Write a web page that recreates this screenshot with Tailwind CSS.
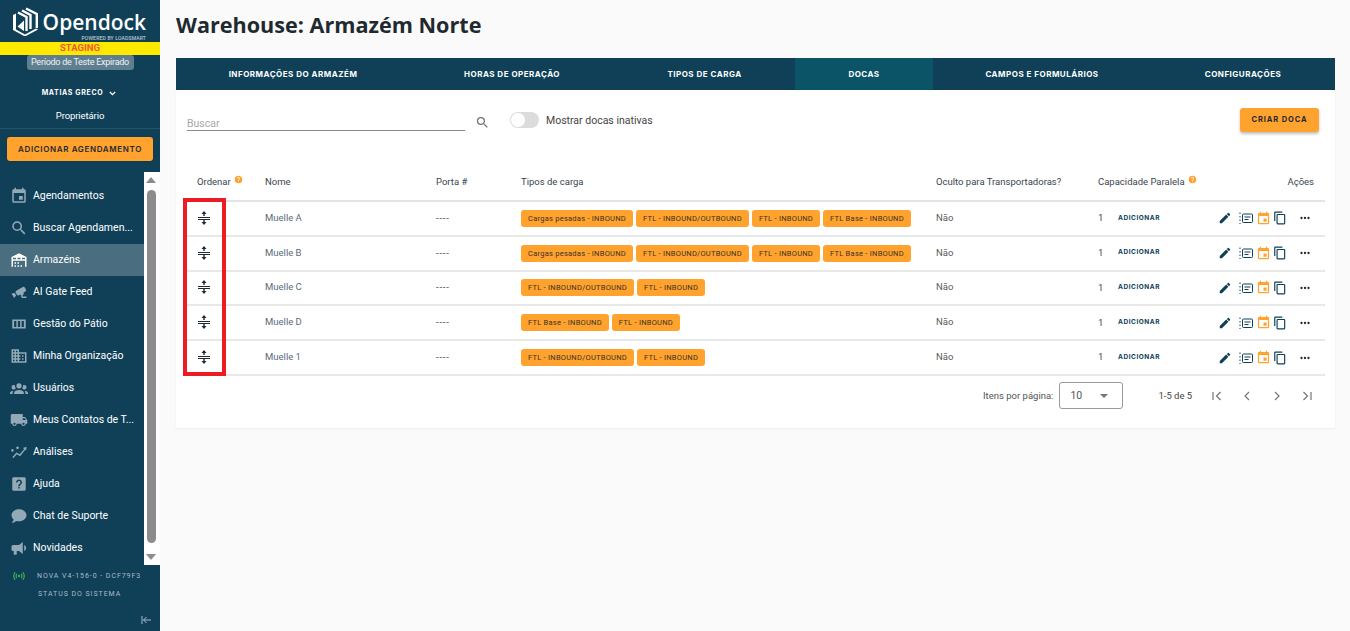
<!DOCTYPE html>
<html lang="pt">
<head>
    <meta charset="UTF-8">
    <title>Opendock - Warehouse</title>
    <script src="https://cdn.jsdelivr.net/npm/@tailwindcss/browser@4"></script>
</head>
<body class="bg-[#fafafa] h-[631px] w-[1350px] overflow-hidden flex font-['Roboto',sans-serif] text-[#2b3a44]">
    <!-- Sidebar -->
    <aside class="w-[160px] h-full shrink-0 bg-[#0f4058] text-white flex flex-col">
        <div class="h-[42px] flex pl-[13px] pt-[7px] gap-[7px]">
            <svg width="25" height="29" viewBox="0 0 25 29" fill="#fff" class="shrink-0">
                <path d="M0 8L3 6.5V22.5L12 27.5 23 21.5 25 22.5 12 29.5 0 23Z"/>
                <g fill="none" stroke="#fff" stroke-width="2.4">
                    <path d="M5 5.5L13.5 10V24"/>
                    <path d="M9 3.5L17.5 8V22"/>
                    <path d="M13 1.5L23.8 7V21"/>
                </g>
                <path d="M11 13.5V24L4.5 19.5Z"/>
            </svg>
            <div class="flex flex-col items-end w-[101px]">
                <span class="font-['Open_Sans',sans-serif] font-semibold text-[21px] leading-[28px] mt-[1px] whitespace-nowrap">Opendock</span>
                <span class="text-[5px] leading-[6px] mt-[-1px] text-white/80 whitespace-nowrap tracking-[0.2px]">POWERED BY LOADSMART</span>
            </div>
        </div>
        <div class="h-[13px] bg-[#ffe900] text-center text-[#f4553f] text-[9.5px] leading-[12px] font-bold">STAGING</div>
        <div class="self-center w-[107px] h-[15px] bg-[#5f7e90] rounded-[3px] text-center text-[9px] leading-[15px] tracking-[-0.25px] text-white/90 whitespace-nowrap">Período de Teste Expirado</div>
        <div class="mt-[18px] flex items-center justify-center gap-[5px] h-[10px] pr-[1px]">
            <span class="font-['Inter',sans-serif] font-bold text-[7px] tracking-[0.65px]">MATIAS GRECO</span>
            <svg width="9" height="9" viewBox="0 0 24 24" fill="none" stroke="#fff" stroke-width="3.5"><path d="M5 8l7 7 7-7"/></svg>
        </div>
        <div class="mt-[11px] text-center text-[9.5px] leading-[14px] h-[18px] tracking-[-0.1px]">Proprietário</div>
        <div class="border-t border-white/10 mt-[1px]"></div>
        <button class="mx-[7px] mt-[8px] h-[24px] rounded-[3px] bg-[#ffa22e] text-[#1f2a30] font-['Inter',sans-serif] font-semibold text-[8px] tracking-[0.65px] shadow-sm whitespace-nowrap">ADICIONAR AGENDAMENTO</button>

        <div class="mt-[11px] h-[393px] flex">
            <nav id="nav" class="w-[144px] pt-[8px] flex flex-col"></nav>
            <div class="w-[16px] bg-white flex flex-col items-center pr-[2px]">
                <svg width="10" height="6" viewBox="0 0 10 6" class="mt-[5px] shrink-0" fill="#8c8c8c"><path d="M5 0l5 6H0z"/></svg>
                <div class="mt-[7px] w-[9px] h-[353px] bg-[#8c8c8c] rounded-[5px] shrink-0"></div>
                <svg width="10" height="6" viewBox="0 0 10 6" class="mt-[11px] shrink-0" fill="#8c8c8c"><path d="M5 6l5-6H0z"/></svg>
            </div>
        </div>
        <div class="mt-[5px] pl-[12px] flex items-center gap-[11px] h-[12px]">
            <svg width="14" height="14" viewBox="0 0 24 24" fill="#3fae56" class="shrink-0"><path d="M4.93,4.93C3.12,6.74 2,9.24 2,12C2,14.76 3.12,17.26 4.93,19.07L6.34,17.66C4.89,16.22 4,14.22 4,12C4,9.79 4.89,7.78 6.34,6.34L4.93,4.93M19.07,4.93L17.66,6.34C19.11,7.78 20,9.79 20,12C20,14.22 19.11,16.22 17.66,17.66L19.07,19.07C20.88,17.26 22,14.76 22,12C22,9.24 20.88,6.74 19.07,4.93M7.76,7.76C6.67,8.85 6,10.35 6,12C6,13.65 6.67,15.15 7.76,16.24L9.17,14.83C8.45,14.11 8,13.11 8,12C8,10.89 8.45,9.89 9.17,9.17L7.76,7.76M16.24,7.76L14.83,9.17C15.55,9.89 16,10.89 16,12C16,13.11 15.55,14.11 14.83,14.83L16.24,16.24C17.33,15.15 18,13.65 18,12C18,10.35 17.33,8.85 16.24,7.76M12,10A2,2 0 0,0 10,12A2,2 0 0,0 12,14A2,2 0 0,0 14,12A2,2 0 0,0 12,10Z"/></svg>
            <span class="text-[7px] tracking-[0.95px] text-[#a9bcc7] whitespace-nowrap">NOVA V4-156-0 - DCF79F3</span>
        </div>
        <div class="mt-[8px] pl-[38px] text-[7px] leading-[9px] tracking-[0.95px] text-[#a9bcc7] whitespace-nowrap">STATUS DO SISTEMA</div>
        <div class="mt-[15px] pr-[8px] flex justify-end">
            <svg width="12" height="12" viewBox="0 0 24 24" fill="none" stroke="#a9bcc7" stroke-width="2"><path d="M4 4v16M22 12H7M13 6l-6 6 6 6"/></svg>
        </div>
    </aside>

    <!-- Main Content -->
    <main class="flex-1 pl-[16px] pr-[15px]">
        <h1 class="h-[58px] pt-[10px] font-['Open_Sans',sans-serif] font-bold text-[21.6px] leading-[30px] text-[#1f2a30]">Warehouse: Armazém Norte</h1>

        <div class="h-[32px] pb-[1px] bg-[#0f4058] flex text-white font-['Inter',sans-serif] font-bold text-[8px] tracking-[0.5px]">
            <div class="w-[234px] flex items-center justify-center">INFORMAÇÕES DO ARMAZÉM</div>
            <div class="w-[204px] flex items-center justify-center">HORAS DE OPERAÇÃO</div>
            <div class="w-[181px] flex items-center justify-center">TIPOS DE CARGA</div>
            <div class="w-[138px] h-[32px] flex items-center justify-center bg-[#0b5366]">DOCAS</div>
            <div class="w-[218px] flex items-center justify-center">CAMPOS E FORMULÁRIOS</div>
            <div class="w-[184px] flex items-center justify-center">CONFIGURAÇÕES</div>
        </div>

        <section class="h-[338px] bg-white shadow-[0_1px_2px_rgba(0,0,0,0.06)] px-[10px]">
            <div class="h-[75px] flex items-start">
                <div class="w-[278px] ml-[1px] mt-[26px] h-[15px] border-b border-[#8a8a8a] pt-[1px] text-[10.5px] leading-[13px] text-[#a8a8a8]">Buscar</div>
                <svg width="15" height="15" viewBox="0 0 24 24" fill="#757575" class="ml-[10px] mt-[25px]"><path d="M9.5,3A6.5,6.5 0 0,1 16,9.5C16,11.11 15.41,12.59 14.44,13.73L14.71,14H15.5L20.5,19L19,20.5L14,15.5V14.71L13.73,14.44C12.59,15.41 11.11,16 9.5,16A6.5,6.5 0 0,1 3,9.5A6.5,6.5 0 0,1 9.5,3M9.5,5C7,5 5,7 5,9.5C5,12 7,14 9.5,14C12,14 14,12 14,9.5C14,7 12,5 9.5,5Z"/></svg>
                <div class="ml-[20px] mt-[22px] w-[29px] h-[16px] rounded-full bg-[#dcdcdc] relative shrink-0">
                    <div class="w-[14px] h-[14px] rounded-full bg-white absolute left-[1px] top-[1px]"></div>
                </div>
                <span class="ml-[7px] mt-[24px] text-[10.5px] leading-[14px] text-[#444]">Mostrar docas inativas</span>
                <button class="ml-auto mr-[6px] mt-[18px] w-[79px] h-[24px] rounded-[3px] bg-[#ffa22e] text-[#1f2a30] font-['Inter',sans-serif] font-bold text-[7.5px] tracking-[0.9px] shadow-[0_2px_3px_rgba(0,0,0,0.25)]">CRIAR DOCA</button>
            </div>

            <!-- Table -->
            <div class="relative">
                <div class="grid grid-cols-[79px_171px_85px_415px_162px_226px] h-[37px] items-center text-[9.5px] text-[#39464e] border-b-2 border-[#e4e4e4]">
                    <div class="pl-[11px] flex items-start gap-[3px]">Ordenar <svg width="9" height="9" viewBox="0 0 24 24" fill="#ffa22e"><path d="M15.07,11.25L14.17,12.17C13.45,12.89 13,13.5 13,15H11V14.5C11,13.39 11.45,12.39 12.17,11.67L13.41,10.41C13.78,10.05 14,9.55 14,9C14,7.89 13.1,7 12,7A2,2 0 0,0 10,9H8A4,4 0 0,1 12,5A4,4 0 0,1 16,9C16,9.88 15.64,10.67 15.07,11.25M13,19H11V17H13M12,2A10,10 0 0,0 2,12A10,10 0 0,0 12,22A10,10 0 0,0 22,12C22,6.47 17.5,2 12,2Z"/></svg></div>
                    <div>Nome</div>
                    <div>Porta #</div>
                    <div>Tipos de carga</div>
                    <div>Oculto para Transportadoras?</div>
                    <div class="flex items-start justify-between pr-[10px]">
                        <span class="flex items-start gap-[3px]">Capacidade Paralela <svg width="9" height="9" viewBox="0 0 24 24" fill="#ffa22e"><path d="M15.07,11.25L14.17,12.17C13.45,12.89 13,13.5 13,15H11V14.5C11,13.39 11.45,12.39 12.17,11.67L13.41,10.41C13.78,10.05 14,9.55 14,9C14,7.89 13.1,7 12,7A2,2 0 0,0 10,9H8A4,4 0 0,1 12,5A4,4 0 0,1 16,9C16,9.88 15.64,10.67 15.07,11.25M13,19H11V17H13M12,2A10,10 0 0,0 2,12A10,10 0 0,0 12,22A10,10 0 0,0 22,12C22,6.47 17.5,2 12,2Z"/></svg></span>
                        <span>Ações</span>
                    </div>
                </div>
                <div id="rows"></div>
                <div class="absolute left-[-3px] top-[33px] w-[43px] h-[178px] border-[4px] border-[#ed1c24]"></div>
            </div>

            <!-- Pagination -->
            <div class="h-[40px] flex items-center text-[9.5px] text-[#555]">
                <span class="ml-[797px]">Itens por página:</span>
                <div class="ml-[6px] w-[64px] h-[27px] border border-[#9a9a9a] rounded-[3px] flex items-center justify-between pl-[10px] pr-[14px] text-[10.5px]">
                    <span>10</span>
                    <svg width="8" height="4" viewBox="0 0 8 4" fill="#757575"><path d="M0 0h8L4 4z"/></svg>
                </div>
                <span class="ml-[35px] text-[#444]">1-5 de 5</span>
                <div class="ml-[19px] flex gap-[18px]">
                    <svg width="12" height="12" viewBox="0 0 24 24" fill="none" stroke="#757575" stroke-width="2.4"><path d="M4 4v16M19 4l-8 8 8 8"/></svg>
                    <svg width="12" height="12" viewBox="0 0 24 24" fill="none" stroke="#757575" stroke-width="2.4"><path d="M16 4l-8 8 8 8"/></svg>
                    <svg width="12" height="12" viewBox="0 0 24 24" fill="none" stroke="#757575" stroke-width="2.4"><path d="M8 4l8 8-8 8"/></svg>
                    <svg width="12" height="12" viewBox="0 0 24 24" fill="none" stroke="#757575" stroke-width="2.4"><path d="M5 4l8 8-8 8M20 4v16"/></svg>
                </div>
            </div>
        </section>
    </main>

    <script>
        const icons = {
            calendar: 'M19 19H5V8h14m-3-7v2H8V1H6v2H5c-1.11 0-2 .89-2 2v14a2 2 0 0 0 2 2h14a2 2 0 0 0 2-2V5a2 2 0 0 0-2-2h-1V1m-1 11h-5v5h5v-5z',
            search: 'M9.5,3A6.5,6.5 0 0,1 16,9.5C16,11.11 15.41,12.59 14.44,13.73L14.71,14H15.5L20.5,19L19,20.5L14,15.5V14.71L13.73,14.44C12.59,15.41 11.11,16 9.5,16A6.5,6.5 0 0,1 3,9.5A6.5,6.5 0 0,1 9.5,3M9.5,5C7,5 5,7 5,9.5C5,12 7,14 9.5,14C12,14 14,12 14,9.5C14,7 12,5 9.5,5Z',
            warehouse: 'M6 19H8V21H6V19M12 3L2 8V21H4V13H20V21H22V8L12 3M8 11H4V9H8V11M14 11H10V9H14V11M20 11H16V9H20V11M6 15H8V17H6V15M10 15H12V17H10V15M10 19H12V21H10V19M14 19H16V21H14V19Z',
            cctv: 'M18.15,4.94C17.77,4.91 17.37,5 17,5.2L8.35,10.2C7.39,10.76 7.07,12 7.62,12.94L9.12,15.53C9.67,16.5 10.89,16.82 11.85,16.27L13.65,15.23C13.92,15.69 14.32,16.06 14.81,16.27V18.04C14.81,19.13 15.7,20 16.81,20H22V18.04H16.81V16.27C17.72,15.87 18.31,14.97 18.31,14C18.31,13.54 18.19,13.11 17.97,12.73L20.5,11.27C21.47,10.71 21.8,9.5 21.24,8.53L19.74,5.94C19.4,5.34 18.79,5 18.15,4.94M6.22,13.17L2,13.87L2.75,15.17L4.75,18.63L5.5,19.93L8.22,16.63L6.22,13.17Z',
            yard: 'M3 6h18v12H3z M5.5 8v8h3V8z M10.5 8v8h3V8z M15.5 8v8h3V8z',
            domain: 'M18,15H16V17H18M18,11H16V13H18M20,19H12V17H14V15H12V13H14V11H12V9H20M10,7H8V5H10M10,11H8V9H10M10,15H8V13H10M10,19H8V17H10M6,7H4V5H6M6,11H4V9H6M6,15H4V13H6M6,19H4V17H6M12,7V3H2V21H22V7H12Z',
            users: 'M12,5.5A3.5,3.5 0 0,1 15.5,9A3.5,3.5 0 0,1 12,12.5A3.5,3.5 0 0,1 8.5,9A3.5,3.5 0 0,1 12,5.5M5,8C5.56,8 6.08,8.15 6.53,8.42C6.38,9.85 6.8,11.27 7.66,12.38C7.16,13.34 6.16,14 5,14A3,3 0 0,1 2,11A3,3 0 0,1 5,8M19,8A3,3 0 0,1 22,11A3,3 0 0,1 19,14C17.84,14 16.84,13.34 16.34,12.38C17.2,11.27 17.62,9.85 17.47,8.42C17.92,8.15 18.44,8 19,8M5.5,18.25C5.5,16.18 8.41,14.5 12,14.5C15.59,14.5 18.5,16.18 18.5,18.25V20H5.5V18.25M0,20V18.5C0,17.11 1.89,15.94 4.45,15.6C3.86,16.28 3.5,17.22 3.5,18.25V20H0M24,20H20.5V18.25C20.5,17.22 20.14,16.28 19.55,15.6C22.11,15.94 24,17.11 24,18.5V20Z',
            truck: 'M18,18.5A1.5,1.5 0 0,1 16.5,17A1.5,1.5 0 0,1 18,15.5A1.5,1.5 0 0,1 19.5,17A1.5,1.5 0 0,1 18,18.5M19.5,9.5L21.46,12H17V9.5M6,18.5A1.5,1.5 0 0,1 4.5,17A1.5,1.5 0 0,1 6,15.5A1.5,1.5 0 0,1 7.5,17A1.5,1.5 0 0,1 6,18.5M20,8H17V4H3C1.89,4 1,4.89 1,6V17H3A3,3 0 0,0 6,20A3,3 0 0,0 9,17H15A3,3 0 0,0 18,20A3,3 0 0,0 21,17H23V12L20,8Z',
            chart: 'M3 19l5.5-6.5 4.5 2.5 6-7-1.8-1.2L22 5l-.5 5-1.2-1L13.5 17.5 9 15l-4.2 5z M3.2 8a1.8 1.8 0 1 0 .01 0z M10 4.5a1.8 1.8 0 1 0 .01 0z',
            help: 'M19 3H5C3.9 3 3 3.9 3 5V19C3 20.1 3.9 21 5 21H19C20.1 21 21 20.1 21 19V5C21 3.9 20.1 3 19 3M13 18H11V16H13V18M13 15H11C11 11.75 14 12 14 10C14 8.9 13.1 8 12 8S10 8.9 10 10H8C8 7.79 9.79 6 12 6S16 7.79 16 10C16 12.5 13 12.75 13 15Z',
            chat: 'M12 3C6.5 3 2 6.58 2 11C2 13.13 3.05 15.07 4.75 16.5C4.7 17.1 4.33 18.67 2 21C2 21 5.55 21 8.47 18.5C9.57 18.82 10.76 19 12 19C17.5 19 22 15.42 22 11S17.5 3 12 3Z',
            horn: 'M12,8H4A2,2 0 0,0 2,10V14A2,2 0 0,0 4,16H5V20A1,1 0 0,0 6,21H8A1,1 0 0,0 9,20V16H12L17,20V4L12,8M21.5,12C21.5,13.71 20.54,15.26 19,16V8C20.53,8.75 21.5,10.3 21.5,12Z',
            pencil: 'M20.71,7.04C21.1,6.65 21.1,6 20.71,5.63L18.37,3.29C18,2.9 17.35,2.9 16.96,3.29L15.12,5.12L18.87,8.87M3,17.25V21H6.75L17.81,9.93L14.06,6.18L3,17.25Z',
            copy: 'M19,21H8V7H19M19,5H8A2,2 0 0,0 6,7V21A2,2 0 0,0 8,23H19A2,2 0 0,0 21,21V7A2,2 0 0,0 19,5M16,1H4A2,2 0 0,0 2,3V17H4V3H16V1Z',
            dots: 'M16,12A2,2 0 0,1 18,10A2,2 0 0,1 20,12A2,2 0 0,1 18,14A2,2 0 0,1 16,12M10,12A2,2 0 0,1 12,10A2,2 0 0,1 14,12A2,2 0 0,1 12,14A2,2 0 0,1 10,12M4,12A2,2 0 0,1 6,10A2,2 0 0,1 8,12A2,2 0 0,1 6,14A2,2 0 0,1 4,12Z'
        };

        const navItems = [
            ['calendar', 'Agendamentos'], ['search', 'Buscar Agendamen...'], ['warehouse', 'Armazéns'],
            ['cctv', 'AI Gate Feed'], ['yard', 'Gestão do Pátio'], ['domain', 'Minha Organização'],
            ['users', 'Usuários'], ['truck', 'Meus Contatos de T...'], ['chart', 'Análises'],
            ['help', 'Ajuda'], ['chat', 'Chat de Suporte'], ['horn', 'Novidades']
        ];

        document.getElementById('nav').innerHTML = navItems.map(([icon, label]) => `
            <a class="h-[32px] shrink-0 flex items-center pl-[10px] gap-[5px] text-[10.5px] whitespace-nowrap ${label === 'Armazéns' ? 'bg-[#4a6d80]' : ''}">
                <svg width="18" height="18" viewBox="0 0 24 24" fill="${label === 'Armazéns' ? '#ffffff' : '#93a9b6'}" fill-rule="evenodd" class="shrink-0"><path d="${icons[icon]}"/></svg>
                <span>${label}</span>
            </a>`).join('');

        const docks = [
            ['Muelle A', ['Cargas pesadas - INBOUND', 'FTL - INBOUND/OUTBOUND', 'FTL - INBOUND', 'FTL Base - INBOUND']],
            ['Muelle B', ['Cargas pesadas - INBOUND', 'FTL - INBOUND/OUTBOUND', 'FTL - INBOUND', 'FTL Base - INBOUND']],
            ['Muelle C', ['FTL - INBOUND/OUTBOUND', 'FTL - INBOUND']],
            ['Muelle D', ['FTL Base - INBOUND', 'FTL - INBOUND']],
            ['Muelle 1', ['FTL - INBOUND/OUTBOUND', 'FTL - INBOUND']]
        ];

        const svg = (d, color, size) => `<svg width="${size}" height="${size}" viewBox="0 0 24 24" fill="${color}" class="shrink-0"><path d="${d}"/></svg>`;

        document.getElementById('rows').innerHTML = docks.map(([name, types]) => `
            <div class="grid grid-cols-[79px_171px_85px_415px_162px_226px] h-[34.8px] items-center text-[9.5px] border-b-2 border-[#e8e8e8]">
                <div class="pl-[11px] pb-[1px]">
                    <svg width="14" height="14" viewBox="0 0 14 14" fill="#1f2a30"><path d="M7 0L9.5 3H7.7V5H6.3V3H4.5zM7 14L4.5 11H6.3V9H7.7V11H9.5zM1 6H13V7H1zM1 8H13V9H1z"/></svg>
                </div>
                <div class="pb-[1px] text-[#5a6b78]">${name}</div>
                <div class="pb-[1px] text-[#444] tracking-[0.8px]">----</div>
                <div class="flex gap-[3px]">${types.map(t => `<span class="h-[17px] px-[7px] rounded-[3px] bg-[#ffa22e] text-[#3a3226] text-[7.5px] leading-[17px] tracking-[0.25px] whitespace-nowrap">${t}</span>`).join('')}</div>
                <div class="pb-[1px] text-[#5a5a5a]">Não</div>
                <div class="flex items-center">
                    <span class="w-[20px] text-[#444]">1</span>
                    <span class="w-[100px] font-['Inter',sans-serif] font-bold text-[6.5px] tracking-[0.55px] text-[#0f4058]">ADICIONAR</span>
                    <span class="w-[21px]">${svg(icons.pencil, '#0f4058', 14)}</span>
                    <svg width="14" height="14" viewBox="0 0 14 14" fill="none" stroke="#0f4058" class="shrink-0"><path d="M1 1.5v1.5M1 5v1.5M1 8.5v1.5M1 12v1"/><rect x="3.5" y="3" width="10" height="8.5" rx="1"/><path d="M5.5 6h6M5.5 8.5h4"/></svg>
                    <span class="ml-[3px] w-[17px]">${svg(icons.calendar, '#ffa22e', 15)}</span>
                    <span class="w-[25px]">${svg(icons.copy, '#0f4058', 14)}</span>
                    ${svg(icons.dots, '#1f2a30', 14)}
                </div>
            </div>`).join('');
    </script>
</body>
</html>
